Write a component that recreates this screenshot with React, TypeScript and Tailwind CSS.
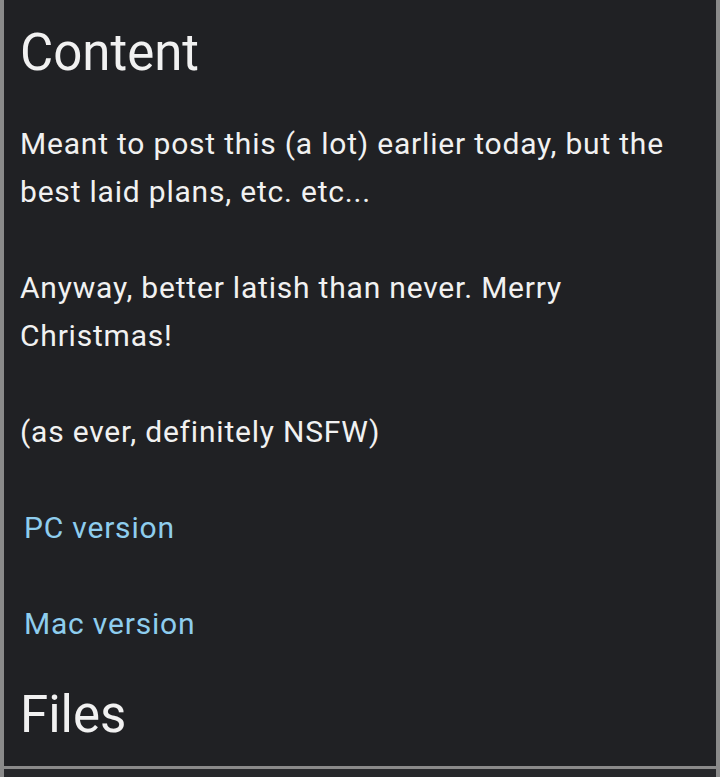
export default function App() {
  return (
    <div className="h-[777px] overflow-hidden border-x-4 border-[#8a8a8a] bg-[#27282b]" style={{ fontFamily: 'Roboto, "Noto Sans", sans-serif' }}>
      <div className="h-[769px] border-b-[3px] border-[#8a8a8a] bg-[#202124] px-4 text-[#f1f1f1]">
        <h2 className="pt-[22px] text-[51px] leading-[62px]">Content</h2>
        <div className="mt-[36px] text-[30px] leading-[48px] tracking-[0.8px]">
          <p className="mb-[48px]">Meant to post this (a lot) earlier today, but the best laid plans, etc. etc...</p>
          <p className="mb-[48px]">Anyway, better latish than never. Merry Christmas!</p>
          <p className="mb-[48px]">(as ever, definitely NSFW)</p>
          <p className="mb-[48px] pl-1">
            <a className="text-[#8ecdee]">PC version</a>
          </p>
          <p className="pl-1">
            <a className="text-[#8ecdee]">Mac version</a>
          </p>
        </div>
        <h2 className="mt-[36px] text-[51px] leading-[62px]">Files</h2>
      </div>
    </div>
  );
}
